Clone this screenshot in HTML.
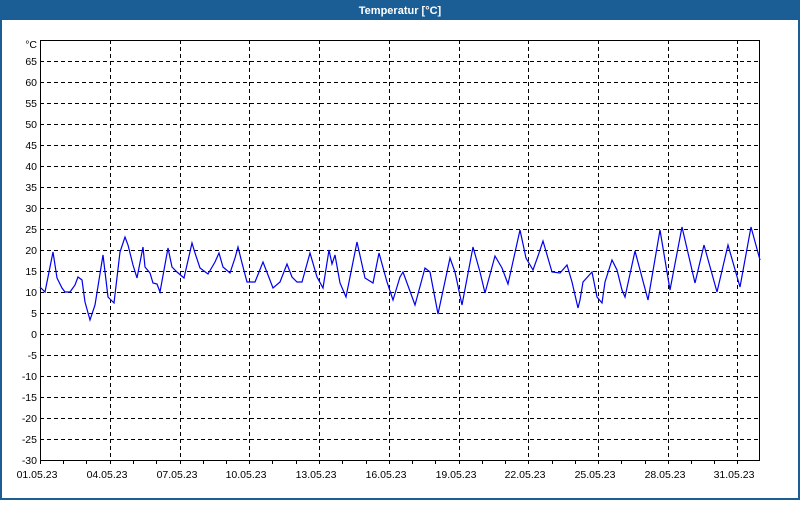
<!DOCTYPE html>
<html><head><meta charset="utf-8"><style>
html,body{margin:0;padding:0;background:#fff;}
body{width:800px;height:500px;overflow:hidden;font-family:"Liberation Sans",sans-serif;}
</style></head><body>
<svg width="800" height="500" xmlns="http://www.w3.org/2000/svg" font-family="Liberation Sans, sans-serif" font-size="10.5">
<rect x="0" y="0" width="800" height="500" fill="#1b5e96"/>
<rect x="2" y="20" width="796" height="478" fill="#fff"/>
<text x="400" y="14" fill="#fff" font-weight="bold" text-anchor="middle" font-size="11">Temperatur [°C]</text>
<g stroke="#000" stroke-dasharray="4,3" stroke-width="1">
<line x1="40" y1="61.5" x2="760" y2="61.5"/><line x1="40" y1="82.5" x2="760" y2="82.5"/><line x1="40" y1="103.5" x2="760" y2="103.5"/><line x1="40" y1="124.5" x2="760" y2="124.5"/><line x1="40" y1="145.5" x2="760" y2="145.5"/><line x1="40" y1="166.5" x2="760" y2="166.5"/><line x1="40" y1="187.5" x2="760" y2="187.5"/><line x1="40" y1="208.5" x2="760" y2="208.5"/><line x1="40" y1="229.5" x2="760" y2="229.5"/><line x1="40" y1="250.5" x2="760" y2="250.5"/><line x1="40" y1="271.5" x2="760" y2="271.5"/><line x1="40" y1="292.5" x2="760" y2="292.5"/><line x1="40" y1="313.5" x2="760" y2="313.5"/><line x1="40" y1="334.5" x2="760" y2="334.5"/><line x1="40" y1="355.5" x2="760" y2="355.5"/><line x1="40" y1="376.5" x2="760" y2="376.5"/><line x1="40" y1="397.5" x2="760" y2="397.5"/><line x1="40" y1="418.5" x2="760" y2="418.5"/><line x1="40" y1="439.5" x2="760" y2="439.5"/>
<line x1="110.5" y1="40" x2="110.5" y2="460"/><line x1="180.5" y1="40" x2="180.5" y2="460"/><line x1="249.5" y1="40" x2="249.5" y2="460"/><line x1="319.5" y1="40" x2="319.5" y2="460"/><line x1="389.5" y1="40" x2="389.5" y2="460"/><line x1="459.5" y1="40" x2="459.5" y2="460"/><line x1="528.5" y1="40" x2="528.5" y2="460"/><line x1="598.5" y1="40" x2="598.5" y2="460"/><line x1="668.5" y1="40" x2="668.5" y2="460"/><line x1="737.5" y1="40" x2="737.5" y2="460"/>
</g>
<rect x="40.5" y="40.5" width="719" height="420" fill="none" stroke="#000"/>
<g stroke="#000">
<line x1="63.5" y1="460" x2="63.5" y2="464"/><line x1="86.5" y1="460" x2="86.5" y2="464"/><line x1="110.5" y1="460" x2="110.5" y2="464"/><line x1="133.5" y1="460" x2="133.5" y2="464"/><line x1="156.5" y1="460" x2="156.5" y2="464"/><line x1="180.5" y1="460" x2="180.5" y2="464"/><line x1="203.5" y1="460" x2="203.5" y2="464"/><line x1="226.5" y1="460" x2="226.5" y2="464"/><line x1="249.5" y1="460" x2="249.5" y2="464"/><line x1="272.5" y1="460" x2="272.5" y2="464"/><line x1="296.5" y1="460" x2="296.5" y2="464"/><line x1="319.5" y1="460" x2="319.5" y2="464"/><line x1="342.5" y1="460" x2="342.5" y2="464"/><line x1="366.5" y1="460" x2="366.5" y2="464"/><line x1="389.5" y1="460" x2="389.5" y2="464"/><line x1="412.5" y1="460" x2="412.5" y2="464"/><line x1="435.5" y1="460" x2="435.5" y2="464"/><line x1="459.5" y1="460" x2="459.5" y2="464"/><line x1="482.5" y1="460" x2="482.5" y2="464"/><line x1="505.5" y1="460" x2="505.5" y2="464"/><line x1="528.5" y1="460" x2="528.5" y2="464"/><line x1="552.5" y1="460" x2="552.5" y2="464"/><line x1="575.5" y1="460" x2="575.5" y2="464"/><line x1="598.5" y1="460" x2="598.5" y2="464"/><line x1="621.5" y1="460" x2="621.5" y2="464"/><line x1="645.5" y1="460" x2="645.5" y2="464"/><line x1="668.5" y1="460" x2="668.5" y2="464"/><line x1="691.5" y1="460" x2="691.5" y2="464"/><line x1="714.5" y1="460" x2="714.5" y2="464"/><line x1="737.5" y1="460" x2="737.5" y2="464"/><line x1="40.5" y1="460" x2="40.5" y2="464"/>
</g>
<g text-anchor="end" fill="#000">
<text x="37" y="48">°C</text>
<text x="37" y="65">65</text><text x="37" y="86">60</text><text x="37" y="107">55</text><text x="37" y="128">50</text><text x="37" y="149">45</text><text x="37" y="170">40</text><text x="37" y="191">35</text><text x="37" y="212">30</text><text x="37" y="233">25</text><text x="37" y="254">20</text><text x="37" y="275">15</text><text x="37" y="296">10</text><text x="37" y="317">5</text><text x="37" y="338">0</text><text x="37" y="359">-5</text><text x="37" y="380">-10</text><text x="37" y="401">-15</text><text x="37" y="422">-20</text><text x="37" y="443">-25</text><text x="37" y="464">-30</text>
</g>
<g text-anchor="middle" fill="#000">
<text x="37" y="478">01.05.23</text><text x="107" y="478">04.05.23</text><text x="177" y="478">07.05.23</text><text x="246" y="478">10.05.23</text><text x="316" y="478">13.05.23</text><text x="386" y="478">16.05.23</text><text x="456" y="478">19.05.23</text><text x="525" y="478">22.05.23</text><text x="595" y="478">25.05.23</text><text x="665" y="478">28.05.23</text><text x="734" y="478">31.05.23</text>
</g>
<polyline fill="none" stroke="#0000ee" stroke-width="1.2" points="40,287 45,292 53,252 57,278 62,288 65,292 70,292 75,285 78,277 82,280 85,302 90,320 95,305 103,255 108,297 114,303 120,252 125,237 128,245 133,265 137,278 143,247 145,267 150,273 153,283 157,284 160,292 168,248 172,267 177,272 184,278 192,243 195,253 200,268 208,274 215,262 219,253 223,267 230,273 235,258 238,247 242,263 247,282 255,282 263,262 273,288 280,282 287,264 292,277 297,282 302,282 310,253 317,277 323,288 329,250 332,264 335,255 340,283 346,297 357,242 365,278 373,283 379,253 387,282 393,300 400,277 403,272 415,305 425,268 430,272 438,314 450,258 455,272 462,305 473,247 480,272 485,293 495,256 502,268 508,284 520,230 526,258 533,270 538,256 543,241 552,272 560,273 567,265 572,282 578,308 580,300 583,282 592,272 597,297 602,303 605,282 612,260 617,270 622,290 625,297 635,251 648,300 660,230 670,290 682,227 695,283 704,245 717,292 728,245 740,287 751,227 760,260"/>
</svg>
</body></html>
